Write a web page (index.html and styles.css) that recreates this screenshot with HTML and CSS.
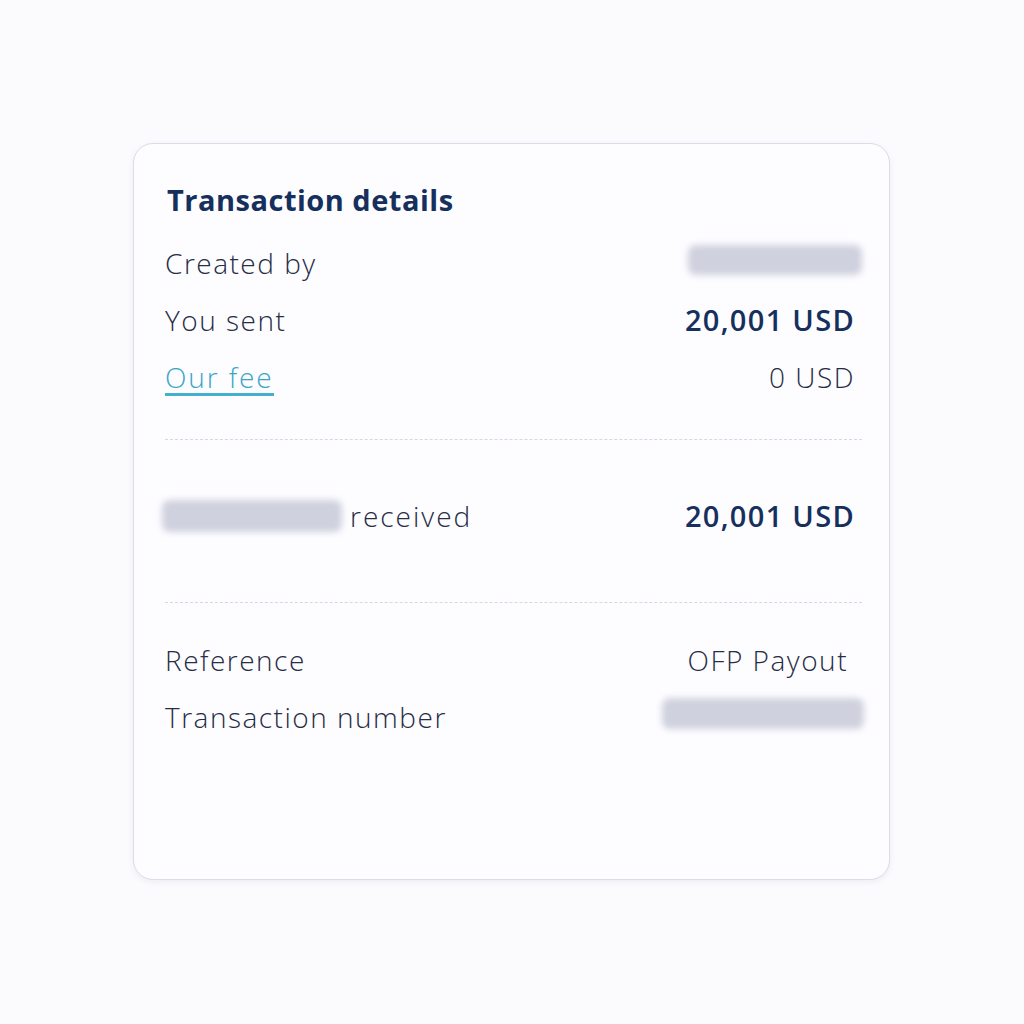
FILE: index.html
```html
<!DOCTYPE html>
<html lang="en">
<head>
<meta charset="utf-8">
<title>Transaction details</title>
<link rel="stylesheet" href="styles.css">
</head>
<body>
<main class="page">
  <section class="card">
    <h2 class="title">Transaction details</h2>
    <div class="group group-top">
      <div class="row">
        <span class="label">Created by</span>
        <span class="blob blob-created"></span>
      </div>
      <div class="row">
        <span class="label">You sent</span>
        <span class="value strong">20,001 USD</span>
      </div>
      <div class="row">
        <a class="label link" href="#">Our fee</a>
        <span class="value">0 USD</span>
      </div>
    </div>
    <hr class="divider divider-1">
    <div class="row row-received">
      <span class="label recv"><span class="blob blob-name"></span>received</span>
      <span class="value strong">20,001 USD</span>
    </div>
    <hr class="divider divider-2">
    <div class="group group-bottom">
      <div class="row">
        <span class="label">Reference</span>
        <span class="value value-ref">OFP Payout</span>
      </div>
      <div class="row">
        <span class="label">Transaction number</span>
        <span class="blob blob-number"></span>
      </div>
    </div>
  </section>
</main>
</body>
</html>
```
FILE: styles.css
```css
html, body {
  margin: 0;
  padding: 0;
  background: #fbfafd;
}
body {
  font-family: "Open Sans", "Lato", sans-serif;
  color: #262d45;
}
.page {
  width: 1024px;
  height: 1024px;
  padding-top: 143px;
  box-sizing: border-box;
  display: flex;
  justify-content: center;
  align-items: flex-start;
}
.card {
  width: 757px;
  height: 737px;
  box-sizing: border-box;
  margin-left: -1px;
  background: #fdfcff;
  border: 1.5px solid #dcdce6;
  border-radius: 20px;
  box-shadow: 0 2px 6px rgba(40, 40, 80, 0.06);
  padding: 36px 27px 0 31px;
  display: flex;
  flex-direction: column;
}
.title {
  margin: 0 0 0 2px;
  font-size: 29px;
  font-weight: 700;
  color: #16305e;
  line-height: 40px;
  letter-spacing: 0.5px;
}
.group {
  display: flex;
  flex-direction: column;
}
.group-top {
  margin-top: 14px;
}
.group-bottom {
  margin-top: 28px;
}
.row {
  display: flex;
  justify-content: space-between;
  align-items: center;
  height: 57px;
  font-size: 28px;
  font-weight: 300;
  letter-spacing: 1.5px;
}
.value {
  padding-right: 7px;
}
.value-ref {
  padding-right: 14px;
}
.strong {
  font-size: 29px;
  font-weight: 600;
  color: #16305e;
  letter-spacing: 1.3px;
}
.link {
  color: #3aa6c6;
  text-decoration: none;
  border-bottom: 3px solid #45b0cc;
  line-height: 32px;
  margin-top: 4px;
  letter-spacing: 1.9px;
}
.divider {
  border: none;
  border-top: 1px dashed #d6d8e0;
  margin: 34px 0 0 0;
  height: 0;
}
.divider-2 {
  margin-top: 58px;
}
.row-received {
  margin-top: 47px;
}
.recv {
  display: flex;
  align-items: center;
  gap: 8px;
  margin-left: -3px;
  letter-spacing: 2px;
}
.blob {
  display: inline-block;
  background: #cfd1de;
  border-radius: 8px;
  filter: blur(3px);
}
.blob-created {
  width: 174px;
  height: 30px;
  margin-top: -6px;
}
.blob-name {
  width: 180px;
  height: 32px;
}
.blob-number {
  width: 202px;
  height: 31px;
  margin-right: -2px;
  margin-top: -6px;
}
```
